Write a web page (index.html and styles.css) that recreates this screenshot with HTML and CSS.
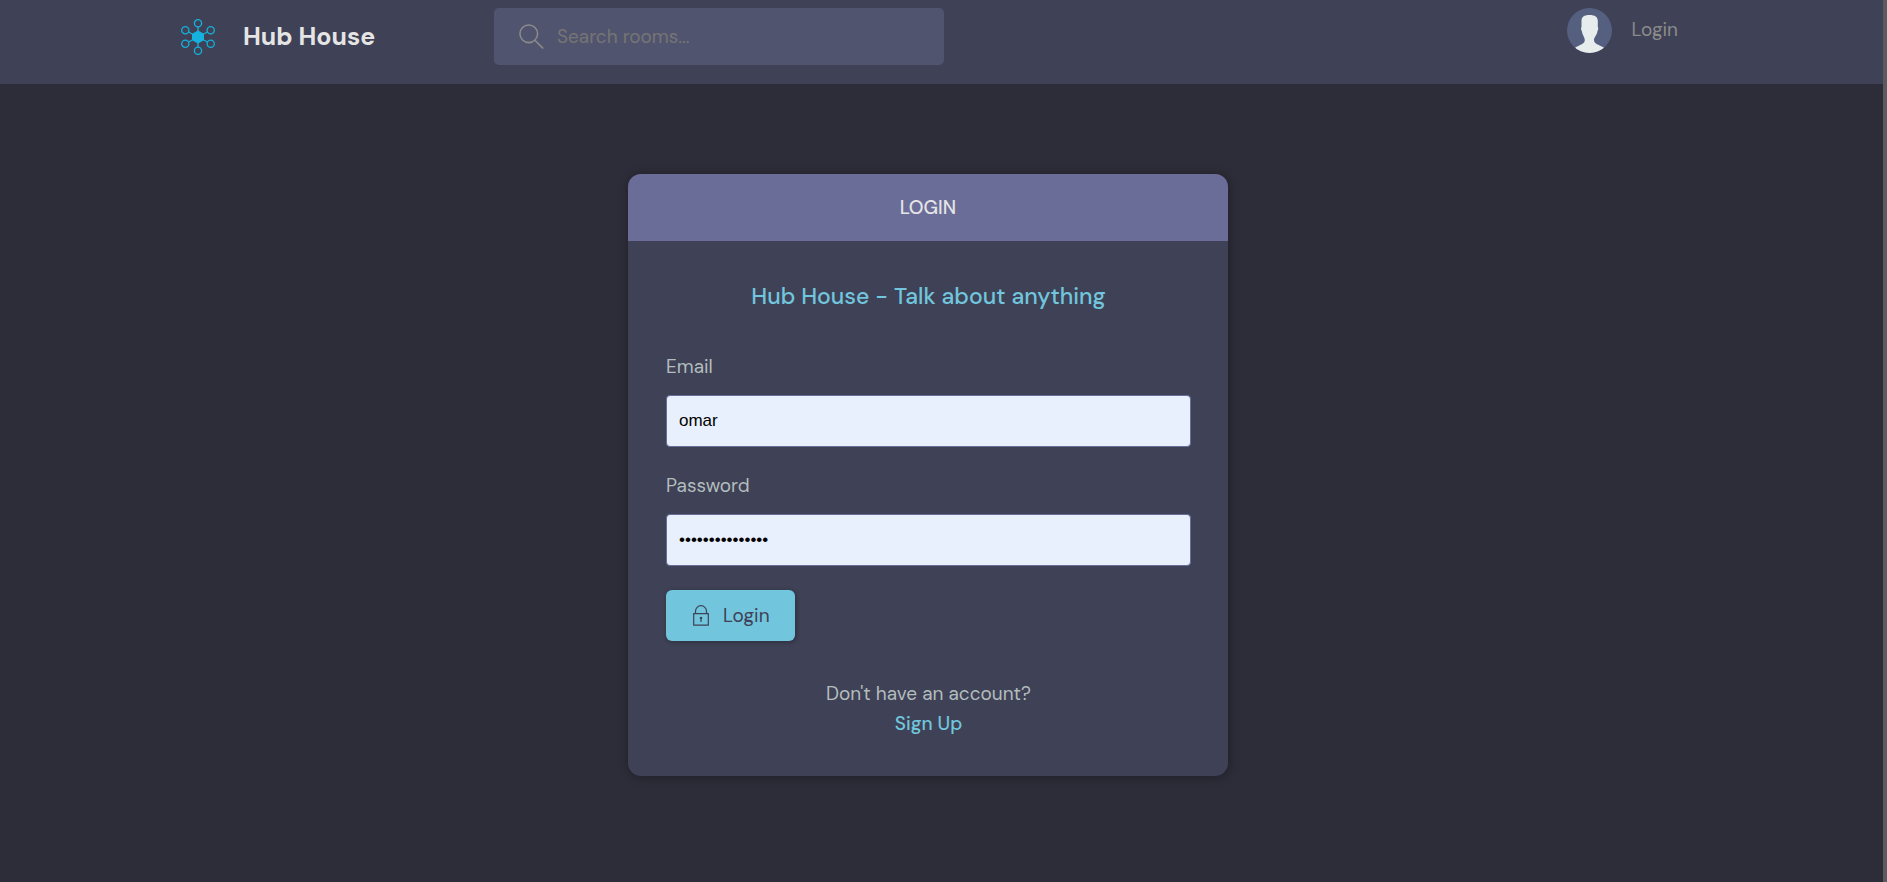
FILE: index.html
```html
<!DOCTYPE html>
<html lang="en">
<head>
<meta charset="utf-8">
<title>Hub House - Login</title>
<link rel="stylesheet" href="styles.css">
</head>
<body>
<header class="header">
  <div class="header__container">
    <a class="logo" href="#">
      <svg class="logo__icon" viewBox="0 0 36 36" aria-hidden="true">
        <g fill="none" stroke="#14b2dc" stroke-width="1.3">
          <path d="M18 8v20M8.500 13l19 10M8.500 23l19-10"/>
          <circle cx="18" cy="4.300" r="3.600"/><circle cx="18" cy="31.700" r="3.600"/>
          <circle cx="5.300" cy="11.200" r="3.600"/><circle cx="30.700" cy="11.200" r="3.600"/>
          <circle cx="5.300" cy="24.700" r="3.600"/><circle cx="30.700" cy="24.700" r="3.600"/>
        </g>
        <path d="M18 12l5.500 3v6L18 24l-5.500-3v-6z" fill="#14b2dc" stroke="#14b2dc" stroke-linejoin="round"/>
      </svg>
      <span class="logo__name">Hub House</span>
    </a>
    <form class="search" role="search">
      <svg class="search__icon" viewBox="0 0 32 32" aria-hidden="true"><g fill="none" stroke="#8b8b8b" stroke-width="2"><circle cx="12.500" cy="12.500" r="11.300"/><path d="M20 20.500 31 31.500"/></g></svg>
      <input class="search__input" type="search" aria-label="Search rooms" placeholder="Search rooms...">
    </form>
    <a class="user" href="#">
      <svg class="user__avatar" viewBox="0 0 45 45" aria-hidden="true">
        <defs><clipPath id="round"><circle cx="22.500" cy="22.500" r="22.500"/></clipPath></defs>
        <g clip-path="url(#round)">
          <path fill="#556080" d="M0 0h45v45H0z"/>
          <path fill="#e7eced" d="M22.500 7C17 7 14.500 9 14.500 13v6c-.8 1-.5 3 .3 4 .5 4 3 6.500 3 9 0 4-4.500 4.500-9.500 7.500V45h28.500v-5.500C31.500 36.500 27 36 27 32c0-2.500 3-5 3.500-9 .8-1 1.100-3 .3-4v-6c0-4-2.800-6-8.300-6z"/>
        </g>
      </svg>
      <span class="user__text">Login</span>
    </a>
  </div>
</header>
<main class="auth">
  <section class="card">
    <h1 class="card__top">LOGIN</h1>
    <div class="card__body">
      <h2 class="card__title">Hub House - Talk about anything</h2>
      <form class="form">
        <div class="form__group">
          <label for="email">Email</label>
          <input class="form__input" id="email" type="text" value="omar">
        </div>
        <div class="form__group">
          <label for="password">Password</label>
          <input class="form__input" id="password" type="password" value="123456789012345">
        </div>
        <button class="btn" type="submit">
          <svg class="btn__icon" viewBox="0 0 16 21" aria-hidden="true"><g fill="none" stroke="#3f4156" stroke-width="1.200"><path d="M.7 8.600h14.600v11.600H.7zM2.500 8.600V6.200a5.500 5.500 0 0 1 11 0v2.400M8 13v4"/></g><circle cx="8" cy="13" r="1.300" fill="#3f4156"/></svg>
          Login
        </button>
      </form>
      <div class="signup">
        <p>Don't have an account?</p>
        <a class="signup__link" href="#">Sign Up</a>
      </div>
    </div>
  </section>
</main>
</body>
</html>
```
FILE: styles.css
```css
*, *::before, *::after { box-sizing: border-box; margin: 0; padding: 0; }
body {
  min-height: 100vh;
  background: #2d2d39;
  border-right: 4px solid #5a5b60;
  color: #b2bdbd;
  font-family: "DM Sans", Inter, sans-serif;
  font-size: 19px;
  line-height: 30px;
}
a { color: inherit; text-decoration: none; }
.header { background: #3f4156; padding: 8px 27px 19px 0; }
.header__container {
  display: flex;
  align-items: flex-start;
  width: 90%;
  max-width: 1500px;
  margin: 0 auto;
}
.logo { display: flex; align-items: center; gap: 27px; height: 57px; width: 316px; padding-left: 2px; }
.logo__icon { width: 36px; height: 36px; }
.logo__name { color: #e5e5e5; font-size: 25px; font-weight: 700; }
.search {
  display: flex;
  align-items: center;
  gap: 13px;
  width: 450px;
  height: 57px;
  padding: 0 25px;
  border-radius: 5px;
  background: #51546e;
}
.search__icon { width: 25px; height: 25px; flex: none; }
.search__input {
  flex: 1;
  min-width: 0;
  border: 0;
  outline: 0;
  background: transparent;
  color: #e5e5e5;
  font: inherit;
}
.search__input::placeholder { color: #757575; }
.user { display: flex; align-items: flex-start; gap: 19px; margin-left: auto; color: #8b8b8b; }
.user__avatar { width: 45px; height: 45px; }
.user__text { line-height: 43px; }
.auth { padding: 90px 27px 40px 0; }
.card {
  max-width: 600px;
  margin: 0 auto;
  border-radius: 13px;
  overflow: hidden;
  background: #3f4156;
  box-shadow: 1px 1px 8px 2px rgba(0, 0, 0, .22);
}
.card__top {
  padding: 18px;
  background: #6b6d99;
  color: #e5e5e5;
  font-size: 19px;
  font-weight: 500;
  line-height: 31px;
  text-align: center;
}
.card__body { padding: 40px 37px 37px 38px; }
.card__title { margin-bottom: 41px; color: #71c6dd; font-size: 23px; font-weight: 500; text-align: center; }
.form__group { display: flex; flex-direction: column; gap: 13px; margin-bottom: 24px; }
.form__input {
  height: 52px;
  padding: 0 12px;
  border: 1px solid #696d97;
  border-radius: 4px;
  outline: 0;
  background: #e8f0fe;
  color: #000;
  font: 17px "Liberation Sans", Arial, sans-serif;
}
.btn {
  display: flex;
  align-items: center;
  gap: 14px;
  height: 51px;
  padding: 0 25px 0 27px;
  border: 0;
  border-radius: 6px;
  background: #71c6dd;
  color: #3f4156;
  font: inherit;
  box-shadow: 1px 1px 4px 1px rgba(0, 0, 0, .22);
}
.btn__icon { width: 16px; height: 21px; }
.signup { margin-top: 38px; text-align: center; }
.signup__link { color: #71c6dd; font-weight: 500; }
```
